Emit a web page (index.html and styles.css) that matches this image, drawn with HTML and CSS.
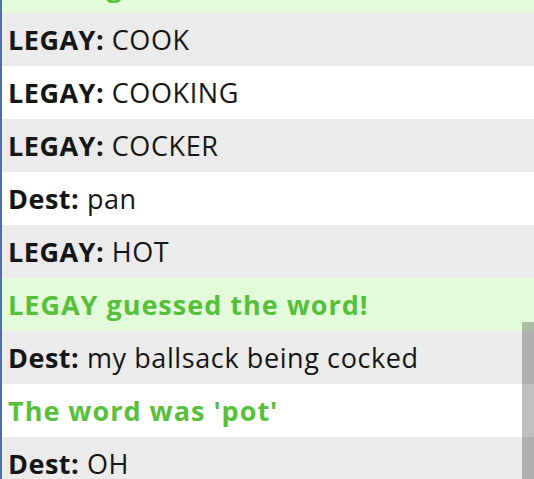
FILE: index.html
```html
<!DOCTYPE html>
<html>
<head>
<meta charset="utf-8">
<link rel="stylesheet" href="styles.css">
</head>
<body>
<div class="chat">
  <div class="log">
    <div class="msg sys first">LEGAY guessed the word!</div>
    <div class="msg odd"><b>LEGAY:</b> COOK</div>
    <div class="msg"><b>LEGAY:</b> COOKING</div>
    <div class="msg odd"><b>LEGAY:</b> COCKER</div>
    <div class="msg"><b>Dest:</b> pan</div>
    <div class="msg odd"><b>LEGAY:</b> HOT</div>
    <div class="msg sys">LEGAY guessed the word!</div>
    <div class="msg odd"><b>Dest:</b> my ballsack being cocked</div>
    <div class="msg sys-w">The word was 'pot'</div>
    <div class="msg odd"><b>Dest:</b> OH</div>
  </div>
  <div class="thumb"></div>
</div>
</body>
</html>
```

FILE: styles.css
```css
html, body {
  margin: 0;
  padding: 0;
  background: #ffffff;
}
.chat {
  position: relative;
  width: 534px;
  height: 479px;
  overflow: hidden;
  border-left: 2px solid #4a6fb0;
  box-sizing: border-box;
  font-family: "Open Sans", "Noto Sans", sans-serif;
  font-size: 27px;
  color: #151515;
}
.log {
  display: flex;
  flex-direction: column;
}
.msg {
  height: 53px;
  flex: none;
  display: flex;
  align-items: center;
  padding-left: 6px;
  white-space: pre;
  letter-spacing: 0.6px;
  background: #ffffff;
}
.msg b {
  font-weight: 700;
  letter-spacing: 0.5px;
}
.msg.odd {
  background: #ebebeb;
}
.msg.sys {
  background: #e3fbda;
  color: #57c03a;
  font-weight: 700;
  letter-spacing: 1px;
}
.msg.sys-w {
  background: #ffffff;
  color: #57c03a;
  font-weight: 700;
  letter-spacing: 1px;
}
.msg.first {
  margin-top: -40px;
}
.thumb {
  position: absolute;
  right: 0;
  top: 322px;
  width: 12px;
  height: 157px;
  background: rgba(0, 0, 0, 0.25);
}
```
